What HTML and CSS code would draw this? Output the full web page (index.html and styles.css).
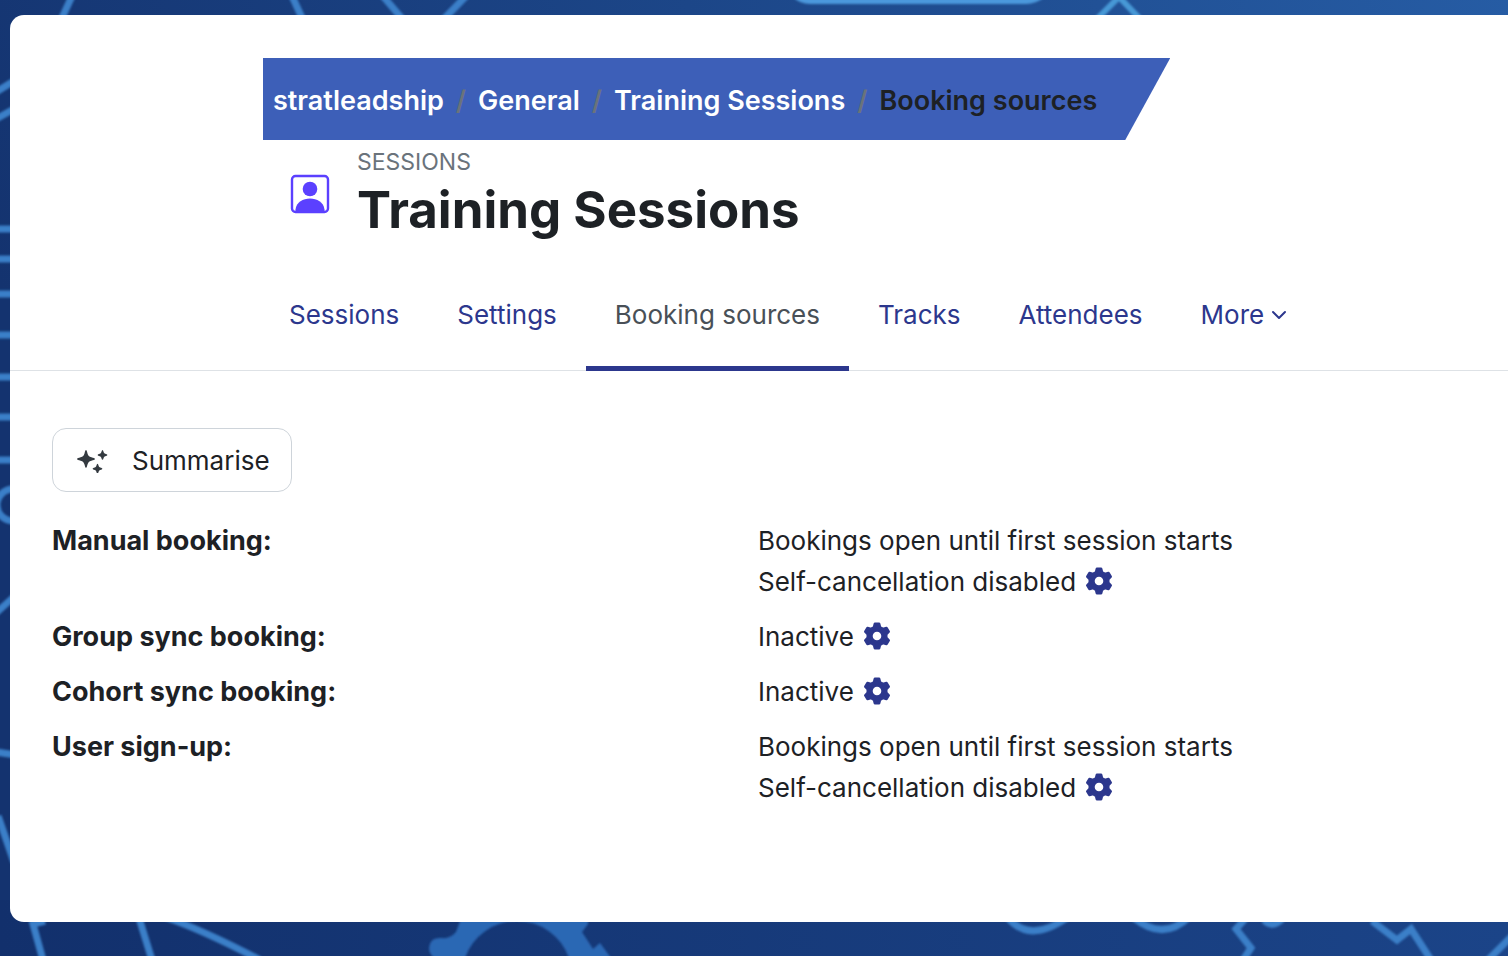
FILE: index.html
```html
<!DOCTYPE html>
<html lang="en">
<head>
<meta charset="utf-8">
<meta name="viewport" content="width=device-width, initial-scale=1">
<title>Training Sessions: Booking sources</title>
<link rel="stylesheet" href="styles.css">
</head>
<body>
<svg class="backdrop" viewBox="0 0 1508 956" preserveAspectRatio="xMidYMid slice" aria-hidden="true">
  <defs>
    <linearGradient id="sky" x1="0" y1=".3" x2="1" y2="0">
      <stop offset="0" stop-color="#14336f"/>
      <stop offset=".5" stop-color="#1c4688"/>
      <stop offset="1" stop-color="#265ca4"/>
    </linearGradient>
    <linearGradient id="floor" x1="0" y1="0" x2="1" y2="0">
      <stop offset="0" stop-color="#12306c"/>
      <stop offset="1" stop-color="#1b4488"/>
    </linearGradient>
    <filter id="glow" x="-5%" y="-5%" width="110%" height="110%"><feGaussianBlur stdDeviation="1"/></filter>
  </defs>
  <rect width="1508" height="956" fill="url(#sky)"/>
  <rect y="900" width="1508" height="56" fill="url(#floor)"/>
  <g filter="url(#glow)" fill="none" stroke="#3b7fc8" stroke-width="7">
    <path d="M72-4 61 20M292-4l11 24M382-5l23 27M467-5l-26 27"/>
    <path d="M1094 22l25-25 24 25" stroke="#4798d6" stroke-width="6"/>
    <path d="M790-6q8 10 20 10h216q12 0 22-10z" fill="#4c98dc" stroke="none"/>
    <path d="M-4 92 14 81M-4 119l18-10M-4 229h20M-4 259h20M-4 294h20M-4 335h20M-4 377h20M-4 417h20M-4 460h20M-4 613l20-18M-4 752l20 3M-2 816l16 46"/>
    <circle cx="13" cy="505" r="16"/>
    <path d="M45 921l-12 3 10 36M139 918l13 42M165 917q40 14 95 43"/>
    <path d="M462 916l-6 16q-6 7-14 6-10-1-12 6-3 8 4 14h31a55 55 0 0 1 104 0h42l-11-15-7 6-11-17 6-8v-10z" fill="#2c67b4" stroke="none"/>
    <path d="M1008 918q22 26 60-1M1134 918q30 24 56-2"/>
    <path d="M1245 919l-9 10 15 19-8 12M1264 920q8 9 18-1M1372 921l25 19 14-11 20 31M1488 960l24-24"/>
  </g>
</svg>

<div class="panel">
  <header class="page-header">
    <nav class="breadcrumb" aria-label="Breadcrumb">
      <ol class="breadcrumb-list">
        <li class="crumb"><a href="#">stratleadship</a></li>
        <li class="crumb"><a href="#">General</a></li>
        <li class="crumb"><a href="#">Training Sessions</a></li>
        <li class="crumb" aria-current="page">Booking sources</li>
      </ol>
    </nav>
    <div class="heading">
      <svg class="heading-icon" viewBox="0 0 40 40" aria-hidden="true">
        <rect x="2" y="2" width="36" height="36" rx="3.500" fill="none" stroke="#5b40ff" stroke-width="2.400"/>
        <circle cx="20" cy="15" r="7.300" fill="#5b40ff"/>
        <path d="M5.500 38.500v-3C6.500 28 13 24.500 20 24.500S33.500 28 34.500 35.500v3z" fill="#5b40ff"/>
      </svg>
      <div class="heading-text">
        <div class="kind">SESSIONS</div>
        <h1 class="title">Training Sessions</h1>
      </div>
    </div>
    <nav class="tabs" aria-label="Activity">
      <a class="tab" href="#">Sessions</a>
      <a class="tab" href="#">Settings</a>
      <a class="tab tab-active" href="#" aria-current="page">Booking sources</a>
      <a class="tab" href="#">Tracks</a>
      <a class="tab" href="#">Attendees</a>
      <button class="tab tab-more" type="button">More
        <svg class="chevron" viewBox="0 0 16 16" aria-hidden="true"><path d="M2 5l6 6 6-6" fill="none" stroke="currentColor" stroke-width="2" stroke-linecap="round" stroke-linejoin="round"/></svg>
      </button>
    </nav>
  </header>

  <main class="content">
    <button class="summarise" type="button">
      <svg class="sparkles" viewBox="0 0 32 26" aria-hidden="true">
        <path d="M10 3c.6 0 1 1.600 1.500 3.400.7 2.400 1.500 3.200 3.900 3.900 2 .6 3.600 1 3.600 1.700s-1.600 1.100-3.600 1.700c-2.400.7-3.200 1.500-3.900 3.900C11 19.400 10.600 21 10 21s-1-1.600-1.500-3.400c-.7-2.400-1.500-3.200-3.900-3.900C2.600 13.100 1 12.700 1 12s1.600-1.100 3.600-1.700c2.400-.7 3.200-1.500 3.900-3.900C9 4.600 9.400 3 10 3z"/>
        <path d="M26.500 3c.9 0 1 2.600 1.800 3.300s3.100.9 3.100 1.700-2.300 1-3.100 1.700-.9 3.100-1.800 3.100-1-2.400-1.800-3.100-3.100-.9-3.100-1.700 2.300-1 3.100-1.700S25.600 3 26.500 3z"/>
        <path d="M21.500 16.700c.9 0 1 2.600 1.800 3.300s3.100.9 3.100 1.700-2.300 1-3.100 1.700-.9 3.100-1.800 3.100-1-2.400-1.800-3.100-3.100-.9-3.100-1.700 2.300-1 3.100-1.700.9-3.300 1.800-3.300z"/>
      </svg>
      Summarise
    </button>

    <svg class="symbols" aria-hidden="true">
      <symbol id="gear" viewBox="0 0 28 28">
        <path fill-rule="evenodd" d="M12 1.900h4l.9 3.400 3.200 1.800 3.400-1 2.100 3.500-2.500 2.600v3.600l2.500 2.600-2.100 3.500-3.400-1-3.200 1.800-.9 3.400h-4l-.9-3.400-3.200-1.800-3.400 1-2.100-3.500 2.500-2.600v-3.600L2.400 9.600l2.100-3.500 3.400 1 3.200-1.800zM14 8.300a5.700 5.700 0 1 0 0 11.400 5.700 5.700 0 0 0 0-11.400z" fill="currentColor" stroke="currentColor" stroke-width="2.800" stroke-linejoin="round"/>
      </symbol>
    </svg>
    <dl class="sources">
      <dt>Manual booking:</dt>
      <dd>Bookings open until first session starts<br>Self-cancellation disabled <a class="edit" href="#" aria-label="Edit manual booking"><svg class="gear"><use href="#gear"/></svg></a></dd>
      <dt>Group sync booking:</dt>
      <dd>Inactive <a class="edit" href="#" aria-label="Edit group sync booking"><svg class="gear"><use href="#gear"/></svg></a></dd>
      <dt>Cohort sync booking:</dt>
      <dd>Inactive <a class="edit" href="#" aria-label="Edit cohort sync booking"><svg class="gear"><use href="#gear"/></svg></a></dd>
      <dt>User sign-up:</dt>
      <dd>Bookings open until first session starts<br>Self-cancellation disabled <a class="edit" href="#" aria-label="Edit user sign-up"><svg class="gear"><use href="#gear"/></svg></a></dd>
    </dl>
  </main>
</div>
</body>
</html>
```

FILE: styles.css
```css
* {
  box-sizing: border-box;
}

body {
  display: flex;
  min-height: 100vh;
  margin: 0;
  padding: 15px 0 34px 10px;
  background: #163a78;
  color: #1d2125;
  font-family: Inter, "Liberation Sans", sans-serif;
  font-size: 26px;
  line-height: 41px;
}

a {
  color: inherit;
  text-decoration: none;
}

button {
  font: inherit;
  cursor: pointer;
}

.backdrop {
  position: absolute;
  inset: 0;
  z-index: -1;
  width: 100%;
  height: 100%;
}

.panel {
  flex: 1;
  background: #fff;
  border-radius: 14px 0 0 14px;
}

.page-header {
  padding: 43px 0 0 250px;
  border-bottom: 1px solid #dee2e6;
}

.breadcrumb {
  width: fit-content;
  margin-left: 3px;
  padding: 22px 73px 19px 10px;
  background: #3d5fb8;
  clip-path: polygon(0 0, 100% 0, calc(100% - 45px) 100%, 0 100%);
  font-size: 27px;
  font-weight: 600;
}

.breadcrumb-list {
  display: flex;
  margin: 0;
  padding: 0;
  list-style: none;
}

.crumb a {
  color: #fff;
}

.crumb + .crumb::before {
  content: "/";
  padding: 0 12px;
  color: #6a737b;
}

.heading {
  display: flex;
  align-items: center;
  gap: 27px;
  padding: 4px 0 0 30px;
}

.heading-icon {
  width: 40px;
  height: 40px;
  margin-top: 4px;
}

.kind {
  color: #6a737b;
  font-size: 23px;
  line-height: 36px;
}

.title {
  margin: 0;
  font-size: 51px;
  font-weight: 700;
  line-height: 60px;
}

.tabs {
  display: flex;
  margin-top: 19px;
  margin-bottom: -1px;
}

.tab {
  padding: 35px 29px 31px;
  border: 0;
  border-bottom: 5px solid transparent;
  background: none;
  color: #2c378d;
}

.tab-active {
  border-bottom-color: #2c378d;
  color: #495057;
}

.tab-more {
  display: flex;
  align-items: center;
  gap: 7px;
}

.chevron {
  width: 16px;
  height: 16px;
}

.content {
  padding: 57px 44px 0 42px;
}

.summarise {
  display: flex;
  align-items: center;
  gap: 24px;
  height: 64px;
  padding: 0 21px 0 23px;
  border: 1px solid #ced4da;
  border-radius: 14px;
  background: #fff;
  color: #1d2125;
}

.sparkles {
  width: 32px;
  height: 26px;
  fill: #343a40;
}

.symbols {
  display: none;
}

.sources {
  display: grid;
  grid-template-columns: 1fr 1fr;
  row-gap: 14px;
  margin: 28px 0 0;
}

.sources dt {
  font-size: 27px;
  font-weight: 700;
}

.sources dd {
  margin: 0;
}

.edit {
  display: inline-flex;
  margin-left: 2px;
  color: #2c378d;
  vertical-align: -4px;
}

.gear {
  width: 28px;
  height: 28px;
}
```
